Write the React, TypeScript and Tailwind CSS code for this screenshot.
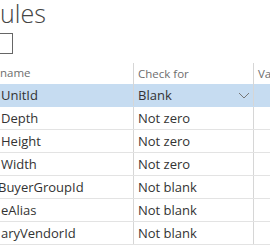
const rows = [
  { field: 'UnitId', check: 'Blank', selected: true },
  { field: 'Depth', check: 'Not zero' },
  { field: 'Height', check: 'Not zero' },
  { field: 'Width', check: 'Not zero' },
  { field: 'BuyerGroupId', check: 'Not blank', shift: true },
  { field: 'eAlias', check: 'Not blank' },
  { field: 'aryVendorId', check: 'Not blank' },
];

function Chevron() {
  return (
    <svg width="12" height="7" viewBox="0 0 12 7" className="shrink-0">
      <polyline points="1,1 6,6 11,1" fill="none" stroke="#777" strokeWidth="1" />
    </svg>
  );
}

export default function App() {
  return (
    <div className="w-[270px] h-[250px] overflow-hidden bg-white font-['Open_Sans',sans-serif] text-[#333]">
      {/* Title */}
      <div className="h-[33px] pt-[1px] text-[25px] font-light leading-[24px] text-[#444] whitespace-nowrap">ules</div>

      {/* Checkbox */}
      <div className="h-[21px] w-[13px] border-y border-r border-[#666]" />

      {/* Grid */}
      <div className="mt-[8px] text-[13px]">
        <div className="flex h-[22px] text-[11.5px] text-[#6e6e6e]">
          <div className="w-[133px] shrink-0 flex items-center whitespace-nowrap">name</div>
          <div className="w-[120px] shrink-0 flex items-center pl-[4px] border-l border-[#d6d6d6] mt-[1px]">Check for</div>
          <div className="flex-1 flex items-center pl-[4px] border-l border-[#d6d6d6] mt-[1px] overflow-hidden whitespace-nowrap">Value</div>
        </div>
        {rows.map((r) => (
          <div
            key={r.field}
            className={
              r.selected
                ? 'flex h-[23px] bg-[#c6dcf1] border-b border-[#c6dcf1]'
                : 'flex h-[23px] border-b border-[#e3e3e3]'
            }
          >
            <div className="w-[133px] shrink-0 flex items-center pt-[1px] whitespace-nowrap overflow-hidden">
              <span className={r.shift ? '-ml-[2px]' : 'pl-[1px]'}>{r.field}</span>
            </div>
            <div className="w-[120px] shrink-0 flex items-center justify-between pt-[1px] pl-[4px] pr-[3px] border-l border-[#d6d6d6]">
              <span>{r.check}</span>
              {r.selected && <Chevron />}
            </div>
            <div className="flex-1 border-l border-[#d6d6d6]" />
          </div>
        ))}
      </div>
    </div>
  );
}
